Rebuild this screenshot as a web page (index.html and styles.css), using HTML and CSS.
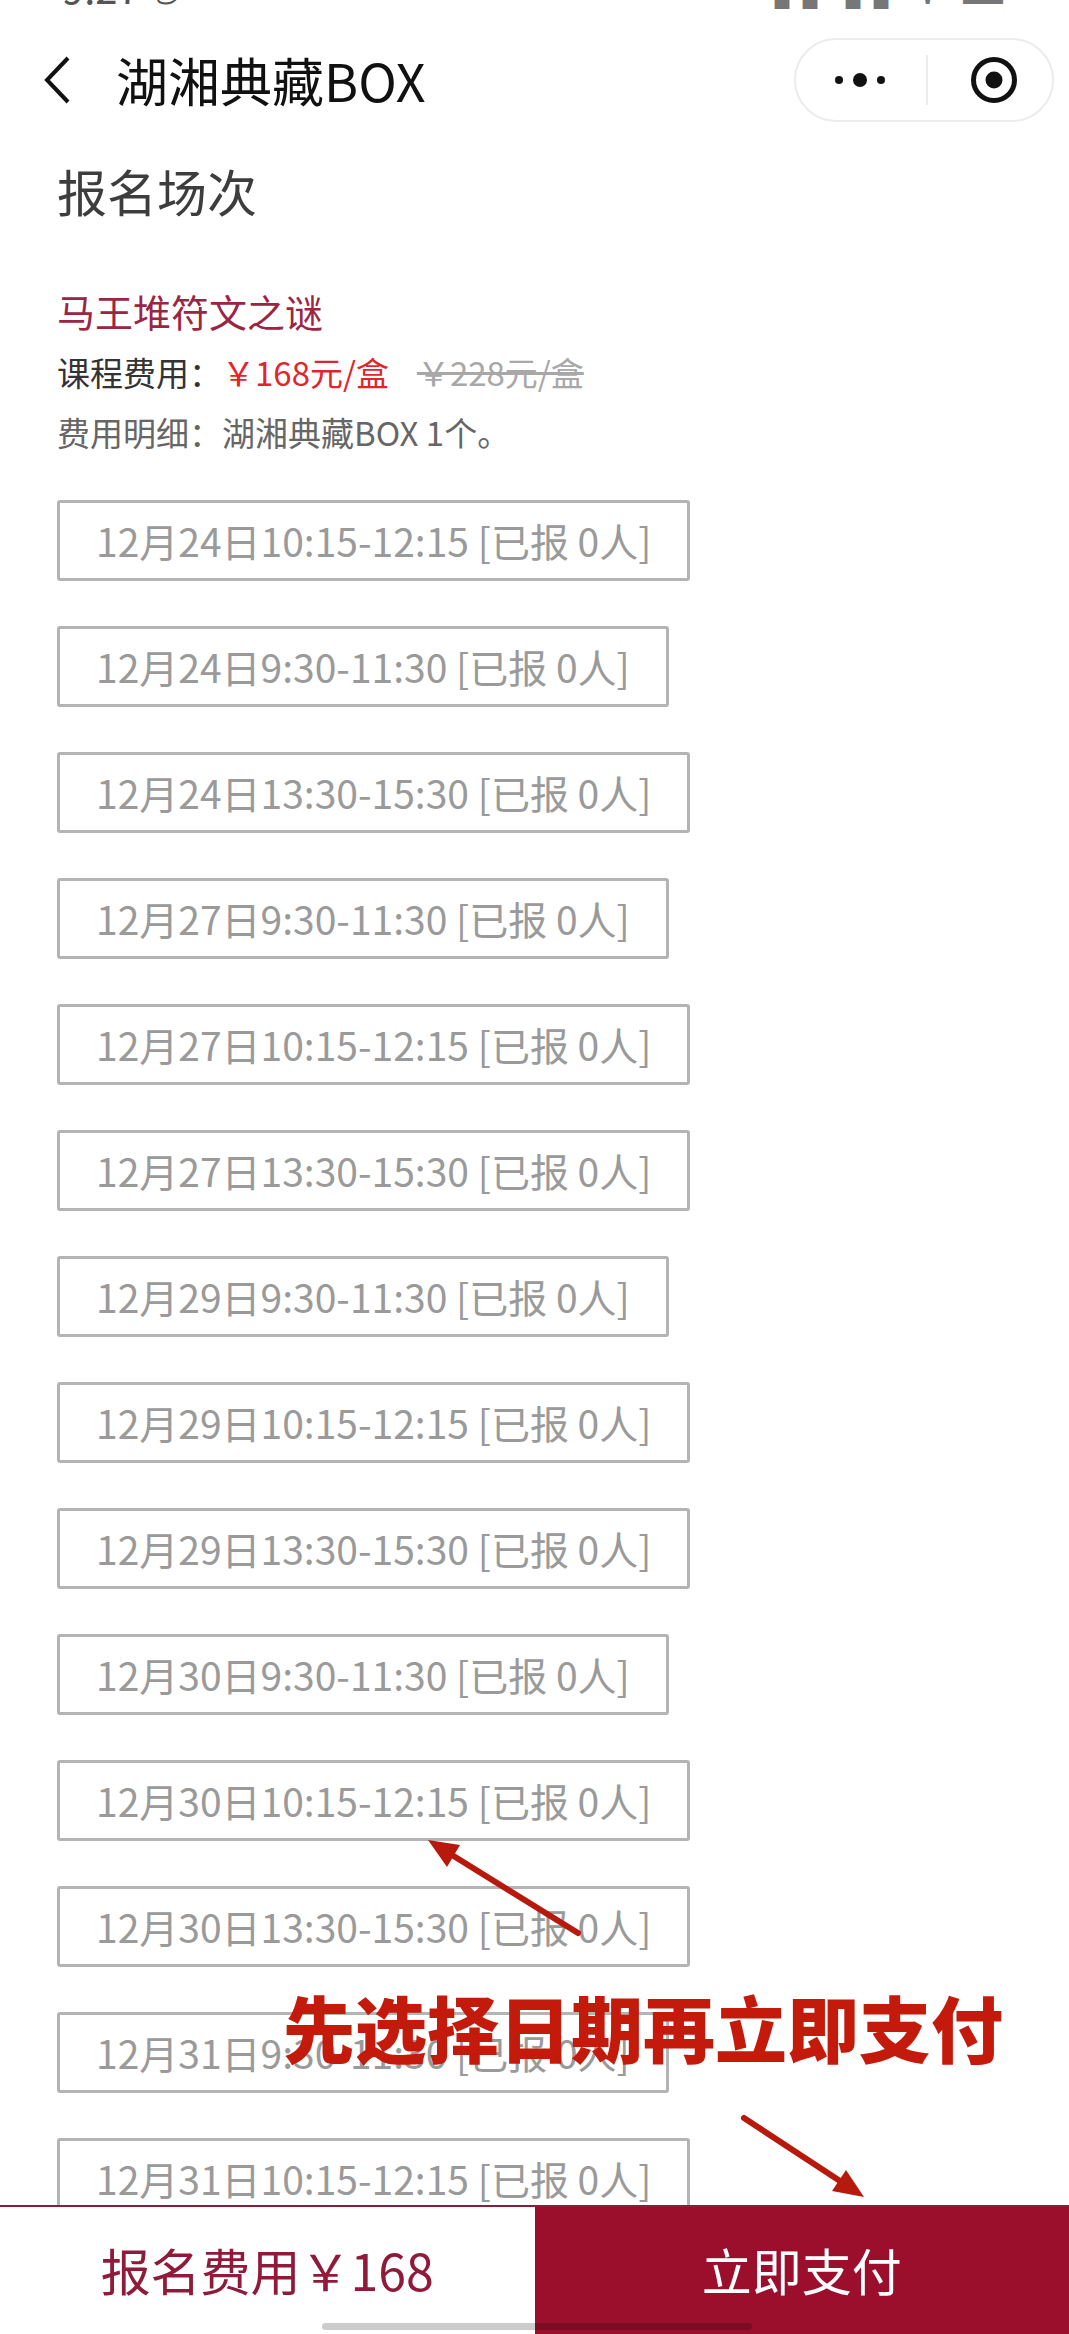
FILE: index.html
```html
<!DOCTYPE html>
<html lang="zh-CN">
<head>
	<meta charset="UTF-8">
	<title>湖湘典藏BOX</title>
	<link rel="stylesheet" href="styles.css">
</head>
<body>
	<div class="page">
		<div class="status">
			<span class="status_time">9:27 ✆</span>
			<span class="status_icons">◔ ▪▪ ▮▮ ▮▮ ⋎ ▬</span>
		</div>

		<header class="nav">
			<svg class="nav_back" width="30" height="48" viewBox="0 0 30 48">
				<polyline points="26,2 5,24 26,46" fill="none" stroke="#111" stroke-width="4"/>
			</svg>
			<h1 class="nav_title">湖湘典藏BOX</h1>
			<div class="capsule">
				<svg class="capsule_more" width="56" height="20" viewBox="0 0 56 20">
					<circle cx="7" cy="10" r="4" fill="#111"/>
					<circle cx="28" cy="10" r="7" fill="#111"/>
					<circle cx="49" cy="10" r="4" fill="#111"/>
				</svg>
				<span class="capsule_line"></span>
				<svg class="capsule_close" width="48" height="48" viewBox="0 0 48 48">
					<circle cx="24" cy="24" r="20.5" fill="none" stroke="#111" stroke-width="5"/>
					<circle cx="24" cy="24" r="8.5" fill="#111"/>
				</svg>
			</div>
		</header>

		<main class="content">
			<h2 class="section_title">报名场次</h2>
			<div class="course">
				<p class="course_name">马王堆符文之谜</p>
				<p class="course_fee">课程费用：<span class="price">￥168元/盒</span><span class="old_price">￥228元/盒</span></p>
				<p class="course_detail">费用明细：湖湘典藏BOX 1个。</p>
			</div>
			<ul class="sessions">
				<li class="session">12月24日10:15-12:15 [已报 0人]</li>
				<li class="session">12月24日9:30-11:30 [已报 0人]</li>
				<li class="session">12月24日13:30-15:30 [已报 0人]</li>
				<li class="session">12月27日9:30-11:30 [已报 0人]</li>
				<li class="session">12月27日10:15-12:15 [已报 0人]</li>
				<li class="session">12月27日13:30-15:30 [已报 0人]</li>
				<li class="session">12月29日9:30-11:30 [已报 0人]</li>
				<li class="session">12月29日10:15-12:15 [已报 0人]</li>
				<li class="session">12月29日13:30-15:30 [已报 0人]</li>
				<li class="session">12月30日9:30-11:30 [已报 0人]</li>
				<li class="session">12月30日10:15-12:15 [已报 0人]</li>
				<li class="session">12月30日13:30-15:30 [已报 0人]</li>
				<li class="session">12月31日9:30-11:30 [已报 0人]</li>
				<li class="session">12月31日10:15-12:15 [已报 0人]</li>
			</ul>
		</main>

		<footer class="paybar">
			<div class="paybar_fee">报名费用￥168</div>
			<button type="button" class="paybar_btn">立即支付</button>
			<span class="home_bar"></span>
		</footer>

		<!-- annotation drawn over the screenshot -->
		<div class="tip">先选择日期再立即支付</div>
		<svg class="arrows" width="1069" height="2334" viewBox="0 0 1069 2334">
			<line x1="578" y1="1933" x2="452" y2="1855" stroke="#b8190d" stroke-width="6" stroke-linecap="round"/>
			<polygon points="428,1840 460,1845 447,1867" fill="#b8190d"/>
			<line x1="744" y1="2118" x2="840" y2="2181" stroke="#b8190d" stroke-width="6" stroke-linecap="round"/>
			<polygon points="864,2197 832,2191 846,2170" fill="#b8190d"/>
		</svg>
	</div>
</body>
</html>
```

FILE: styles.css
```css
*{
	font-family: "Noto Sans CJK SC", "Noto Sans", sans-serif;
	margin: 0;
	padding: 0;
	box-sizing: border-box;
}
body{
	background-color: #fff;
}
.page{
	position: relative;
	width: 1069px;
	height: 2334px;
	display: flex;
	flex-direction: column;
	overflow: hidden;
}
.status{
	height: 12px;
	overflow: hidden;
	display: flex;
	justify-content: space-between;
	padding: 0 60px 0 62px;
	color: #555;
	font-size: 40px;
	line-height: 40px;
}
.status > span{
	margin-top: -33px;
}
.status_icons{
	color: #777;
	letter-spacing: 6px;
}
.nav{
	display: flex;
	align-items: center;
	height: 112px;
	padding: 26px 15px 2px 42px;
}
.nav_back{
	flex: none;
}
.nav_title{
	flex: 1;
	margin-left: 44px;
	font-size: 52px;
	font-weight: normal;
	color: #111;
	line-height: 60px;
}
.capsule{
	width: 260px;
	height: 84px;
	border: 2px solid #ececec;
	border-radius: 42px;
	display: flex;
	align-items: center;
	padding-left: 36px;
}
.capsule_line{
	width: 2px;
	height: 50px;
	background-color: #ececec;
	margin: 0 42px 0 38px;
}
.content{
	flex: 1;
	overflow: hidden;
	padding: 36px 0 0 57px;
}
.section_title{
	font-size: 50px;
	font-weight: normal;
	color: #3d3d3d;
	line-height: 60px;
}
.course{
	margin-top: 66px;
}
.course_name{
	font-size: 38px;
	line-height: 50px;
	color: #9b2545;
	margin-bottom: 6px;
}
.course_fee,
.course_detail{
	font-size: 33px;
	line-height: 60px;
	color: #333;
}
.course_detail{
	color: #666;
}
.price{
	color: #e1262b;
}
.old_price{
	margin-left: 28px;
	color: #a8a8a8;
	text-decoration: line-through;
}
.sessions{
	list-style: none;
	margin-top: 38px;
	display: flex;
	flex-direction: column;
	align-items: flex-start;
	gap: 45px;
}
.session{
	height: 81px;
	padding: 0 36px;
	border: 3px solid #b4b4b4;
	border-radius: 3px;
	font-size: 39px;
	line-height: 75px;
	color: #9a9a9a;
	white-space: nowrap;
}
.paybar{
	position: relative;
	flex: none;
	height: 129px;
	display: flex;
	border-top: 2px solid #8f1a3a;
}
.paybar_fee{
	flex: 1;
	display: flex;
	align-items: center;
	justify-content: center;
	font-size: 50px;
	color: #8f1a3a;
	padding-bottom: 4px;
}
.paybar_btn{
	flex: 1;
	border: none;
	background-color: #9b0f2c;
	color: #fff;
	font-size: 50px;
	padding-bottom: 4px;
}
.home_bar{
	position: absolute;
	left: 322px;
	bottom: 4px;
	width: 430px;
	height: 7px;
	border-radius: 4px;
	background-color: rgba(0,0,0,0.2);
}
.tip{
	position: absolute;
	left: 283px;
	top: 1990px;
	font-size: 72px;
	font-weight: 900;
	line-height: 1;
	color: #c41a0c;
	white-space: nowrap;
}
.arrows{
	position: absolute;
	left: 0;
	top: 0;
	pointer-events: none;
}
```
